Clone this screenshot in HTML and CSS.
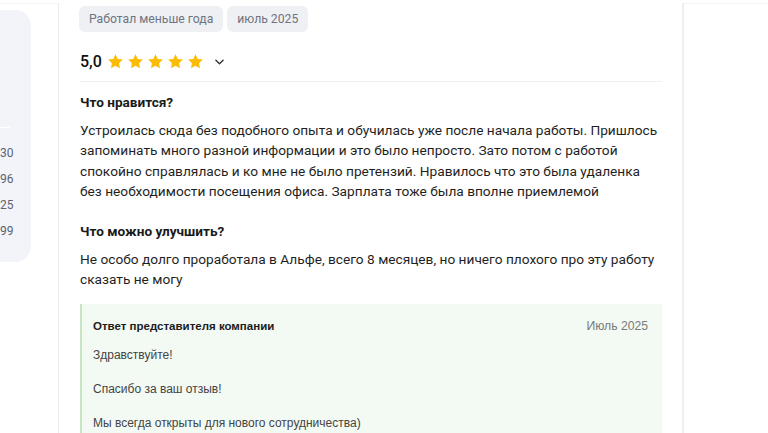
FILE: index.html
```html
<!DOCTYPE html>
<html lang="ru">
<head>
<meta charset="utf-8">
<link rel="stylesheet" href="styles.css">
</head>
<body>
<div class="page">
  <aside class="side">
    <div class="side-top"></div>
    <ul class="side-nums">
      <li>30</li>
      <li>96</li>
      <li>25</li>
      <li>99</li>
    </ul>
  </aside>
  <main class="card">
    <div class="chips">
      <span class="chip">Работал меньше года</span>
      <span class="chip">июль 2025</span>
    </div>
    <div class="rating">
      <span class="score">5,0</span>
      <span class="stars">
        <svg class="star" viewBox="0 0 24 24"><path d="M12 1.8l3.1 6.6 7.2.9-5.3 5 1.4 7.1L12 17.9l-6.4 3.5L7 14.3l-5.3-5 7.2-.9z"/></svg>
        <svg class="star" viewBox="0 0 24 24"><path d="M12 1.8l3.1 6.6 7.2.9-5.3 5 1.4 7.1L12 17.9l-6.4 3.5L7 14.3l-5.3-5 7.2-.9z"/></svg>
        <svg class="star" viewBox="0 0 24 24"><path d="M12 1.8l3.1 6.6 7.2.9-5.3 5 1.4 7.1L12 17.9l-6.4 3.5L7 14.3l-5.3-5 7.2-.9z"/></svg>
        <svg class="star" viewBox="0 0 24 24"><path d="M12 1.8l3.1 6.6 7.2.9-5.3 5 1.4 7.1L12 17.9l-6.4 3.5L7 14.3l-5.3-5 7.2-.9z"/></svg>
        <svg class="star" viewBox="0 0 24 24"><path d="M12 1.8l3.1 6.6 7.2.9-5.3 5 1.4 7.1L12 17.9l-6.4 3.5L7 14.3l-5.3-5 7.2-.9z"/></svg>
      </span>
      <svg class="chev" viewBox="0 0 10 6"><path d="M1 1l4 4 4-4" fill="none" stroke="#333" stroke-width="1.5" stroke-linecap="round" stroke-linejoin="round"/></svg>
    </div>
    <div class="divider"></div>
    <h3 class="q">Что нравится?</h3>
    <p class="text">Устроилась сюда без подобного опыта и обучилась уже после начала работы. Пришлось запоминать много разной информации и это было непросто. Зато потом с работой спокойно справлялась и ко мне не было претензий. Нравилось что это была удаленка без необходимости посещения офиса. Зарплата тоже была вполне приемлемой</p>
    <h3 class="q">Что можно улучшить?</h3>
    <p class="text">Не особо долго проработала в Альфе, всего 8 месяцев, но ничего плохого про эту работу сказать не могу</p>
    <section class="reply">
      <div class="reply-head">
        <span class="reply-title">Ответ представителя компании</span>
        <span class="reply-date">Июль 2025</span>
      </div>
      <p class="reply-text">Здравствуйте!</p>
      <p class="reply-text">Спасибо за ваш отзыв!</p>
      <p class="reply-text">Мы всегда открыты для нового сотрудничества)</p>
    </section>
  </main>
</div>
</body>
</html>
```

FILE: styles.css
```css
html, body {
  margin: 0;
  padding: 0;
  background: #ffffff;
  overflow: hidden;
  height: 433px;
}
body {
  font-family: Roboto, "Noto Sans", sans-serif;
  color: #1f1f1f;
}
.page {
  display: flex;
  align-items: flex-start;
  gap: 27px;
  border-top: 1px solid #f4f4f6;
  margin-top: 3px;
}
.side {
  flex: 0 0 31px;
  margin-top: 6px;
  height: 252px;
  background: #f3f4f9;
  border-radius: 0 16px 16px 0;
  box-sizing: border-box;
  overflow: hidden;
}
.side-top {
  height: 117px;
  border-bottom: 1px solid #ffffff;
  margin-right: 21px;
}
.side-nums {
  list-style: none;
  margin: 0;
  padding: 12px 21px 0 0;
  text-align: right;
  font-size: 12px;
  line-height: 26px;
  color: #5d6270;
}
.card {
  flex: 0 0 626px;
  box-sizing: border-box;
  height: 440px;
  margin-top: -1px;
  border-left: 1px solid #ededf0;
  border-right: 2px solid #efeff1;
  background: #fff;
  padding: 3px 20px 0 21px;
}
.chips {
  display: flex;
  gap: 4px;
  margin-left: -1px;
}
.chip {
  height: 26px;
  line-height: 26px;
  padding: 0 10px;
  border-radius: 6px;
  background: #eef0f4;
  color: #6e7481;
  font-size: 12.2px;
}
.rating {
  display: flex;
  align-items: center;
  height: 24px;
  margin-top: 17px;
}
.score {
  font-size: 16px;
  font-weight: 500;
  color: #111;
  margin-right: 5px;
}
.stars {
  display: flex;
  gap: 3px;
}
.star {
  width: 17px;
  height: 17px;
  fill: #fbbc05;
}
.chev {
  width: 9px;
  height: 6px;
  margin-left: 11px;
  margin-top: 1px;
}
.divider {
  height: 1px;
  background: #efeff2;
  margin-top: 8px;
}
.q {
  margin: 10px 0 0;
  font-size: 13.6px;
  font-weight: 700;
  line-height: 20px;
  color: #1a1a1a;
}
.text {
  margin: 8px 0 0;
  max-width: 582px;
  font-size: 13.7px;
  line-height: 20.3px;
  color: #1f1f1f;
}
.text + .q {
  margin-top: 20px;
}
.reply {
  margin-top: 14px;
  background: #f3f9f3;
  border-left: 2px solid #c7e5c3;
  padding: 15px 14px 0 11px;
  height: 140px;
}
.reply-head {
  display: flex;
  justify-content: space-between;
  align-items: baseline;
  font-family: "Liberation Sans", Arial, sans-serif;
}
.reply-title {
  font-size: 11.5px;
  font-weight: 700;
  color: #1c1c1c;
}
.reply-date {
  font-size: 12.2px;
  color: #7a7a7a;
}
.reply-text {
  margin: 13px 0 0;
  font-family: "Liberation Sans", Arial, sans-serif;
  font-size: 12px;
  line-height: 19px;
  color: #444;
}
.reply-text + .reply-text {
  margin-top: 15px;
}
```
